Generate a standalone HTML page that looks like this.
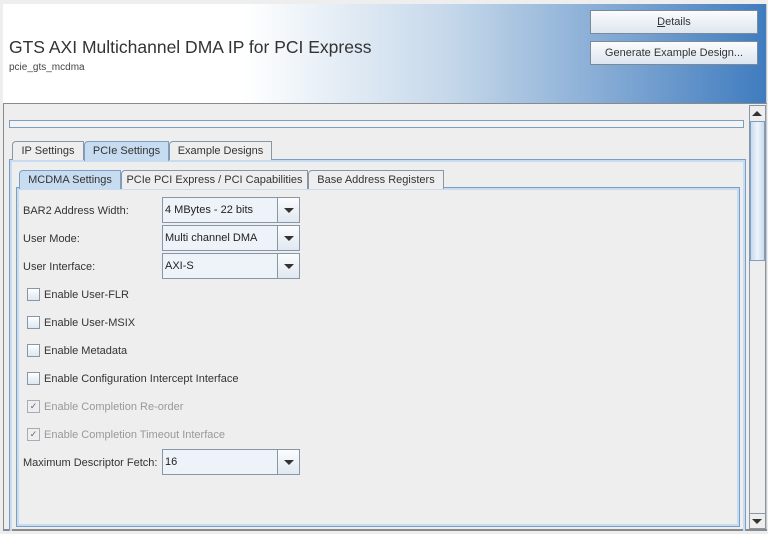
<!DOCTYPE html>
<html><head><style>
*{box-sizing:border-box;margin:0;padding:0}
body{width:768px;height:534px;background:#eeeeee;font-family:"Liberation Sans",sans-serif;font-size:11px;color:#333;position:relative;overflow:hidden;white-space:nowrap}
.abs{position:absolute}
#hdr{left:3px;top:4px;width:763px;height:100px;background:linear-gradient(to right,#fff 0px,#fff 240px,#c4d7ea 450px,#7ea6d2 620px,#3f7cbf 763px)}
.btn{position:absolute;left:590px;width:168px;height:24px;border:1px solid #7a8a99;background:linear-gradient(#fbfcfd,#dde6ef);text-align:center;line-height:23px;font-size:11px;color:#333}
.tab{position:absolute;height:19px;border:1px solid #8797a8;border-bottom:none;background:#eeeeee;line-height:19px;text-align:center;font-size:11px;border-radius:4px 0 0 0}
.tab.sel{background:#c7dcf0;border-color:#7d9ec4}
.combo{position:absolute;left:162px;width:138px;height:26px;border:1px solid #8797a8;background:#eef3f9}
.combo span{position:absolute;left:2px;top:6px;font-size:11px;color:#222}
.combo i{position:absolute;right:0;top:0;width:22px;height:24px;border-left:1px solid #8797a8;background:linear-gradient(#fbfcfd,#e1e8f0)}
.combo i:after{content:"";position:absolute;left:6px;top:10px;border-left:5px solid transparent;border-right:5px solid transparent;border-top:5px solid #333}
.lbl{position:absolute;left:23px;font-size:11px;color:#333}
.cb{position:absolute;left:27px;width:13px;height:13px;border:1px solid #8797a8;background:linear-gradient(#fff,#dde6ef)}
.cbl{position:absolute;left:44px;font-size:11px;color:#333}
.dis{color:#999}
</style></head><body>
<div class="abs" style="left:3px;top:4px;width:764px;height:527px;border:1px solid #c8c8c8;background:#eee"></div>
<div id="hdr" class="abs"></div>
<div class="abs" style="left:9px;top:37px;font-size:17.5px;color:#333">GTS AXI Multichannel DMA IP for PCI Express</div>
<div class="abs" style="left:9px;top:62px;font-size:10px;color:#444">pcie_gts_mcdma</div>
<div class="btn" style="top:10px"><u>D</u>etails</div>
<div class="btn" style="top:41px">Generate Example Design...</div>
<div class="abs" style="left:3px;top:103px;width:764px;height:1px;background:#8a8a8a"></div>
<div class="abs" style="left:3px;top:103px;width:1px;height:428px;background:#8a8a8a"></div>
<div class="abs" style="left:3px;top:529px;width:764px;height:2px;background:#8a8a8a"></div>
<div class="abs" style="left:749px;top:105px;width:17px;height:424px;background:#eee;border:1px solid #8a96a3"></div>
<div class="abs" style="left:750px;top:121px;width:15px;height:140px;border:1px solid #7d9ec4;background:linear-gradient(to right,#c9dbee,#eef4fa,#c9dbee)"></div>
<div class="abs" style="left:752px;top:111px;border-left:5px solid transparent;border-right:5px solid transparent;border-bottom:5px solid #333"></div>
<div class="abs" style="left:750px;top:513px;width:15px;height:15px;border-top:1px solid #8a96a3"></div>
<div class="abs" style="left:752px;top:519px;border-left:5px solid transparent;border-right:5px solid transparent;border-top:5px solid #333"></div>
<div class="abs" style="left:9px;top:120px;width:735px;height:8px;border:1px solid #7d9ec4;background:#f4f4f4"></div>
<div class="abs" style="left:9px;top:159px;width:737px;height:372px;border:1px solid #7d9ec4;border-bottom:none;box-shadow:inset 2px 2px 0 #c7dcf0,inset -2px 0 0 #c7dcf0"></div>
<div class="tab" style="left:12px;top:141px;width:72px">IP Settings</div>
<div class="tab sel" style="left:84px;top:141px;width:85px;height:20px">PCIe Settings</div>
<div class="tab" style="left:169px;top:141px;width:103px">Example Designs</div>
<div class="abs" style="left:16px;top:187px;width:724px;height:340px;border:1px solid #7d9ec4;box-shadow:inset 2px 2px 0 #c7dcf0,inset -2px -2px 0 #c7dcf0"></div>
<div class="tab sel" style="left:19px;top:170px;width:102px;height:19px">MCDMA Settings</div>
<div class="tab" style="left:121px;top:170px;width:187px">PCIe PCI Express / PCI Capabilities</div>
<div class="tab" style="left:308px;top:170px;width:136px">Base Address Registers</div>
<div class="lbl" style="top:205px">BAR2 Address Width:</div>
<div class="combo" style="top:197px"><span>4 MBytes - 22 bits</span><i></i></div>
<div class="lbl" style="top:233px">User Mode:</div>
<div class="combo" style="top:225px"><span>Multi channel DMA</span><i></i></div>
<div class="lbl" style="top:261px">User Interface:</div>
<div class="combo" style="top:253px"><span>AXI-S</span><i></i></div>
<div class="cb" style="top:288px"></div><div class="cbl" style="top:289px">Enable User-FLR</div>
<div class="cb" style="top:316px"></div><div class="cbl" style="top:317px">Enable User-MSIX</div>
<div class="cb" style="top:344px"></div><div class="cbl" style="top:345px">Enable Metadata</div>
<div class="cb" style="top:372px"></div><div class="cbl" style="top:373px">Enable Configuration Intercept Interface</div>
<div class="cb" style="top:400px;border-color:#aab;background:#eee;font-size:9px;line-height:11px;text-align:center;color:#666">✓</div><div class="cbl dis" style="top:401px">Enable Completion Re-order</div>
<div class="cb" style="top:428px;border-color:#aab;background:#eee;font-size:9px;line-height:11px;text-align:center;color:#666">✓</div><div class="cbl dis" style="top:429px">Enable Completion Timeout Interface</div>
<div class="lbl" style="top:457px">Maximum Descriptor Fetch:</div>
<div class="combo" style="top:449px"><span>16</span><i></i></div>
</body></html>
